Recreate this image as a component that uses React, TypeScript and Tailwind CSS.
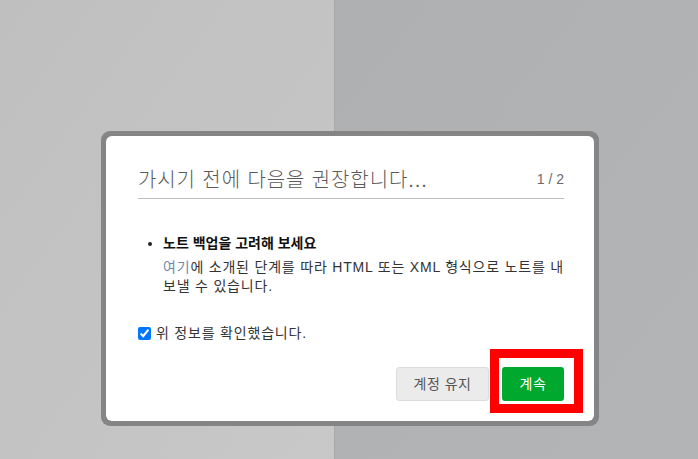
import React from "react";

const font = { fontFamily: '"Liberation Sans", "Noto Sans CJK KR", sans-serif' };

export default function App() {
  return (
    <div className="relative w-full h-[459px] overflow-hidden flex" style={font}>
      {/* backdrop panels */}
      <div className="w-[335px] h-full bg-gradient-to-br from-[#bfbfbf] to-[#c8c8c8] border-r border-[#a6a8aa]" />
      <div className="flex-1 h-full bg-gradient-to-br from-[#aeb0b2] to-[#b2b4b6]" />

      {/* dialog */}
      <div className="absolute left-[101px] top-[131px] w-[498px] h-[295px] rounded-[9px] bg-[#858585] p-[5px]">
        <div className="h-full w-full rounded-[6px] bg-white pl-[32px] pr-[30px] pt-[29px] pb-[20px] flex flex-col">
          <div className="flex items-end justify-between border-b border-[#bdbdbd] pb-[4px]">
            <h2 className="text-[20px] leading-[28px] font-light text-[#5a5a5a] tracking-[0.9px]">
              가시기 전에 다음을 권장합니다...
            </h2>
            <span className="text-[14px] leading-[28px] text-[#6b6b6b] pb-[1px]">1 / 2</span>
          </div>

          <ul className="mt-[34px] pl-[25px] list-disc text-[14px] text-[#222]">
            <li>
              <div className="font-bold leading-[20px] text-[#111]">노트 백업을 고려해 보세요</div>
              <p className="mt-[5px] leading-[19px] text-[#333] tracking-[0.8px]">
                <span className="text-[#6f8aa6]">여기</span>에 소개된 단계를 따라 HTML 또는 XML 형식으로 노트를 내
                보낼 수 있습니다.
              </p>
            </li>
          </ul>

          <label className="mt-[27px] flex items-center gap-[5px] text-[14px] text-[#333] tracking-[0.8px]">
            <input type="checkbox" defaultChecked className="w-[13px] h-[13px] m-0 accent-[#0075ff]" />
            위 정보를 확인했습니다.
          </label>

          <div className="mt-auto flex justify-end gap-[13px]">
            <button className="w-[93px] h-[34px] rounded-[3px] border border-[#dcdcdc] bg-[#ebebeb] text-[14px] text-[#555] tracking-[0.5px]">
              계정 유지
            </button>
            <button className="w-[62px] h-[34px] rounded-[3px] bg-[#00a82d] text-[14px] text-white tracking-[0.5px]">
              계속
            </button>
          </div>
        </div>
      </div>

      {/* highlight box */}
      <div className="absolute left-[490px] top-[349px] w-[93px] h-[64px] border-[9px] border-[#ff0000]" />
    </div>
  );
}
